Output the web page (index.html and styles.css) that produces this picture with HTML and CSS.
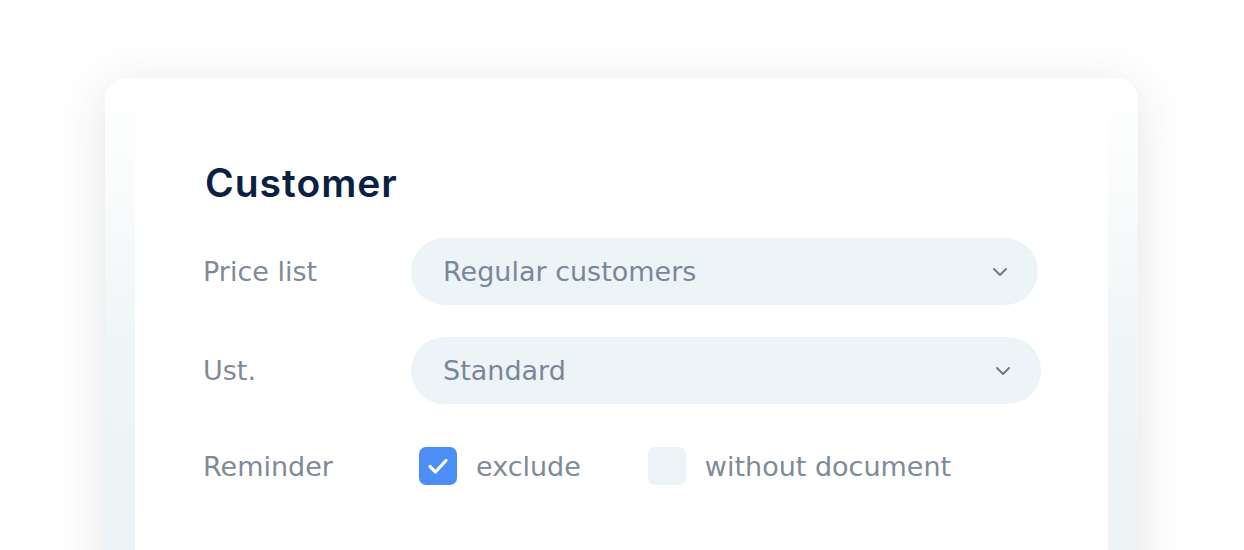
FILE: index.html
```html
<!DOCTYPE html>
<html>
<head>
<meta charset="utf-8">
<link rel="stylesheet" href="styles.css">
</head>
<body>
<div class="stage">
  <div class="outer">
    <div class="inner">
      <h1 class="title">Customer</h1>
      <div class="form">
        <div class="label">Price list</div>
        <div class="select">
          <span>Regular customers</span>
          <svg class="chev" width="16" height="10" viewBox="0 0 16 10"><path d="M2 2 L8 8 L14 2" fill="none" stroke="#6f7a8a" stroke-width="2" stroke-linecap="round" stroke-linejoin="round"/></svg>
        </div>
        <div class="label">Ust.</div>
        <div class="select wide">
          <span>Standard</span>
          <svg class="chev" width="16" height="10" viewBox="0 0 16 10"><path d="M2 2 L8 8 L14 2" fill="none" stroke="#6f7a8a" stroke-width="2" stroke-linecap="round" stroke-linejoin="round"/></svg>
        </div>
        <div class="label reminder">Reminder</div>
        <div class="checks">
          <div class="check">
            <span class="box on"><svg width="22" height="18" viewBox="0 0 22 18"><path d="M3 9.5 L8.5 15 L19 3.5" fill="none" stroke="#fff" stroke-width="3.2" stroke-linecap="round" stroke-linejoin="round"/></svg></span>
            <span class="ctext">exclude</span>
          </div>
          <div class="check">
            <span class="box"></span>
            <span class="ctext">without document</span>
          </div>
        </div>
      </div>
    </div>
  </div>
</div>
</body>
</html>
```
FILE: styles.css
```css
html, body {
  margin: 0;
  padding: 0;
  background: #ffffff;
  font-family: "DejaVu Sans", "Noto Sans", sans-serif;
  overflow: hidden;
}
.stage {
  width: 1244px;
  height: 550px;
  padding-top: 78px;
  box-sizing: border-box;
  overflow: hidden;
}
.outer {
  margin-left: 105px;
  width: 1033px;
  height: 520px;
  border-radius: 22px 22px 0 0;
  background: linear-gradient(180deg, #ffffff 0%, #fafcfc 20%, #f0f5f7 50%, #ecf2f5 100%);
  box-shadow: 0 8px 50px rgba(40, 50, 65, 0.13);
  padding: 30px 30px 0 30px;
  box-sizing: border-box;
}
.inner {
  background: #ffffff;
  height: 100%;
  border-radius: 14px 14px 0 0;
  padding: 52px 0 0 70px;
  box-sizing: border-box;
}
.title {
  margin: 0 0 32px 0;
  font-family: "Inter", "Noto Sans", sans-serif;
  font-size: 39px;
  font-weight: 600;
  color: #0b2143;
  letter-spacing: 1px;
  line-height: 46px;
}
.form {
  display: grid;
  grid-template-columns: 206px auto;
  row-gap: 32px;
  align-items: center;
}
.label {
  font-size: 27px;
  color: #7f8a99;
  margin-left: -2px;
}
.label.reminder {
  margin-top: 11px;
}
.select {
  width: 627px;
  height: 67px;
  border-radius: 34px;
  background: #edf4f8;
  display: flex;
  align-items: center;
  justify-content: space-between;
  padding: 0 30px 0 32px;
  box-sizing: border-box;
  font-size: 27px;
  color: #7b8797;
}
.select.wide {
  width: 630px;
}
.chev {
  display: block;
}
.checks {
  display: flex;
  align-items: center;
  gap: 67px;
  padding-left: 8px;
  margin-top: 11px;
}
.check {
  display: flex;
  align-items: center;
  gap: 19px;
}
.box {
  width: 38px;
  height: 38px;
  border-radius: 7px;
  background: #edf4f8;
  display: flex;
  align-items: center;
  justify-content: center;
}
.box.on {
  background: #4d8df6;
}
.ctext {
  font-size: 27px;
  color: #7f8a99;
}
```
